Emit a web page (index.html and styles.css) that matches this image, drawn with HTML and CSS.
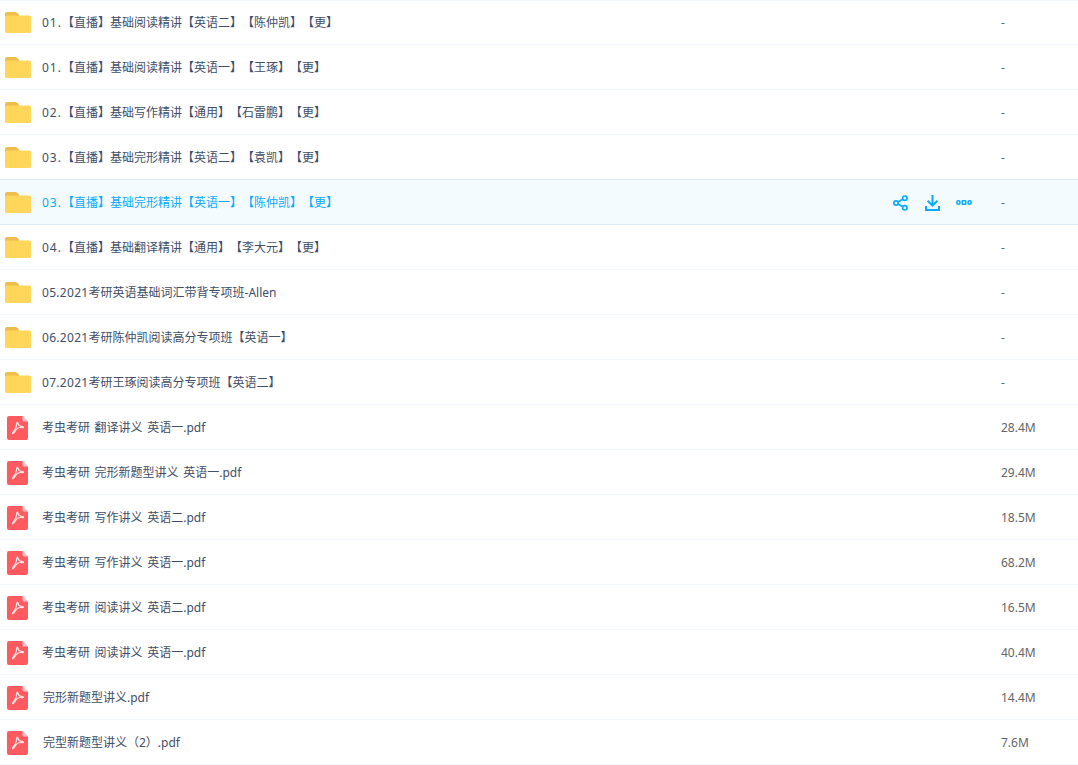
FILE: index.html
```html
<!DOCTYPE html>
<html lang="zh-CN">
<head>
<meta charset="utf-8">
<title>文件列表</title>
<link rel="stylesheet" href="styles.css">
</head>
<body>
<svg class="defs" width="0" height="0">
	<symbol id="folder" viewBox="0 0 26 21">
		<path fill="#eebd4d" d="M0 2q0-2 2-2h8q2 0 3 1.500l1 1.500v4h-14z"/>
		<rect fill="#ffd659" y="3.500" width="26" height="17.500" rx="1.500"/>
	</symbol>
	<symbol id="pdf" viewBox="0 0 21 24">
		<path fill="#ff5a5f" d="M2 0h13.500l5.500 5.500v16.500q0 2-2 2h-17q-2 0-2-2v-20q0-2 2-2z"/>
		<path fill="#ffc4c6" d="M15.500 0l5.500 5.500h-4q-1.500 0-1.500-1.500z"/>
		<path fill="none" stroke="#ffe3e4" stroke-width="1.200" d="M10.200 6c-.8 0 0 3.500-1.700 6.500s-3.500 4.500-3 5 2.500-1.800 4-4.200 4.500-1.900 6.300-1.600c1 .1 1-1 0-1-2.500-.2-4.300-1.500-4.800-3.200-.4-1.400.2-1.500-.8-1.500z"/>
	</symbol>
</svg>

<ul class="file_list">
	<li class="file_row"><svg class="ico_folder"><use href="#folder"/></svg><span class="file_name"><span class="file_no">01.</span>【直播】基础阅读精讲【英语二】【陈仲凯】【更】</span><span class="file_size">-</span></li>
	<li class="file_row"><svg class="ico_folder"><use href="#folder"/></svg><span class="file_name"><span class="file_no">01.</span>【直播】基础阅读精讲【英语一】【王琢】【更】</span><span class="file_size">-</span></li>
	<li class="file_row"><svg class="ico_folder"><use href="#folder"/></svg><span class="file_name"><span class="file_no">02.</span>【直播】基础写作精讲【通用】【石雷鹏】【更】</span><span class="file_size">-</span></li>
	<li class="file_row"><svg class="ico_folder"><use href="#folder"/></svg><span class="file_name"><span class="file_no">03.</span>【直播】基础完形精讲【英语二】【袁凯】【更】</span><span class="file_size">-</span></li>
	<li class="file_row file_row_on">
		<svg class="ico_folder"><use href="#folder"/></svg>
		<span class="file_name"><span class="file_no">03.</span>【直播】基础完形精讲【英语一】【陈仲凯】【更】</span>
		<span class="file_tools">
			<svg class="tool_share" viewBox="0 0 15 16"><g fill="none" stroke="#09aaff" stroke-width="1.700"><circle cx="3" cy="8" r="2.200"/><circle cx="11.800" cy="3.200" r="2.200"/><circle cx="11.800" cy="12.800" r="2.200"/><path d="M5 6.900l4.800-2.600M5 9.100l4.800 2.600"/></g></svg>
			<svg class="tool_down" viewBox="0 0 15 16"><path fill="#09aaff" d="M6.500 0h2v8.300l3.200-3.200 1.400 1.400-5.600 5.500-5.600-5.500 1.400-1.400 3.200 3.200zM0 11h2v3h11v-3h2v5h-15z"/></svg>
			<svg class="tool_more" viewBox="0 0 16 5"><g fill="none" stroke="#09aaff" stroke-width="1.500"><rect x=".8" y=".8" width="3.200" height="3.400" rx="1.500"/><rect x="6.200" y=".8" width="3.600" height="3.400" rx=".3"/><rect x="12" y=".8" width="3.200" height="3.400" rx="1.500"/></g></svg>
		</span>
		<span class="file_size">-</span>
	</li>
	<li class="file_row"><svg class="ico_folder"><use href="#folder"/></svg><span class="file_name"><span class="file_no">04.</span>【直播】基础翻译精讲【通用】【李大元】【更】</span><span class="file_size">-</span></li>
	<li class="file_row"><svg class="ico_folder"><use href="#folder"/></svg><span class="file_name"><span class="file_year">05.2021</span>考研英语基础词汇带背专项班-Allen</span><span class="file_size">-</span></li>
	<li class="file_row"><svg class="ico_folder"><use href="#folder"/></svg><span class="file_name"><span class="file_year">06.2021</span>考研陈仲凯阅读高分专项班【英语一】</span><span class="file_size">-</span></li>
	<li class="file_row"><svg class="ico_folder"><use href="#folder"/></svg><span class="file_name"><span class="file_year">07.2021</span>考研王琢阅读高分专项班【英语二】</span><span class="file_size">-</span></li>
	<li class="file_row"><svg class="ico_pdf"><use href="#pdf"/></svg><span class="file_name">考虫考研 翻译讲义 英语一.pdf</span><span class="file_size">28.4M</span></li>
	<li class="file_row"><svg class="ico_pdf"><use href="#pdf"/></svg><span class="file_name">考虫考研 完形新题型讲义 英语一.pdf</span><span class="file_size">29.4M</span></li>
	<li class="file_row"><svg class="ico_pdf"><use href="#pdf"/></svg><span class="file_name">考虫考研 写作讲义 英语二.pdf</span><span class="file_size">18.5M</span></li>
	<li class="file_row"><svg class="ico_pdf"><use href="#pdf"/></svg><span class="file_name">考虫考研 写作讲义 英语一.pdf</span><span class="file_size">68.2M</span></li>
	<li class="file_row"><svg class="ico_pdf"><use href="#pdf"/></svg><span class="file_name">考虫考研 阅读讲义 英语二.pdf</span><span class="file_size">16.5M</span></li>
	<li class="file_row"><svg class="ico_pdf"><use href="#pdf"/></svg><span class="file_name">考虫考研 阅读讲义 英语一.pdf</span><span class="file_size">40.4M</span></li>
	<li class="file_row"><svg class="ico_pdf"><use href="#pdf"/></svg><span class="file_name file_name_in">完形新题型讲义.pdf</span><span class="file_size">14.4M</span></li>
	<li class="file_row"><svg class="ico_pdf"><use href="#pdf"/></svg><span class="file_name file_name_in">完型新题型讲义（2）.pdf</span><span class="file_size">7.6M</span></li>
</ul>
</body>
</html>
```

FILE: styles.css
```css
*{ margin:0; padding:0; box-sizing:border-box; }
html,body{ background:#fff; overflow:hidden; }
body{
	font:12px/16px "Noto Sans","Noto Sans CJK SC",sans-serif;
	color:#424e67;
	text-spacing-trim:space-all;
}
.defs{ display:block; height:0; }
.file_list{ list-style:none; }
.file_row{
	display:flex;
	align-items:center;
	height:45px;
	padding-top:1px;
	border-bottom:1px solid #f2f6fd;
}
.file_row:first-child{ box-shadow:inset 0 1px #f2f6fd; }
.file_row_on{
	border-bottom-color:#daebfe;
	background:#f4fbff;
	box-shadow:0 -1px #daebfe;
	color:#09aaff;
}
.ico_folder{
	flex:none;
	width:26px;
	height:21px;
	margin:0 11px 0 5px;
}
.ico_pdf{
	flex:none;
	width:21px;
	height:24px;
	margin:1px 14px 0 7px;
}
.file_name{
	flex:1;
	white-space:nowrap;
	word-spacing:1.5px;
}
.file_name_in{ margin-left:1px; }
.file_no{ letter-spacing:1px; }
.file_year{ letter-spacing:.3px; }
.file_tools{
	display:flex;
	align-items:center;
	width:108px;
	flex:none;
}
.tool_share{ width:15px; height:16px; margin-right:17px; }
.tool_down{ width:15px; height:16px; margin-right:16px; }
.tool_more{ width:16px; height:5px; }
.file_size{
	flex:none;
	width:77px;
	color:#666;
}
```
